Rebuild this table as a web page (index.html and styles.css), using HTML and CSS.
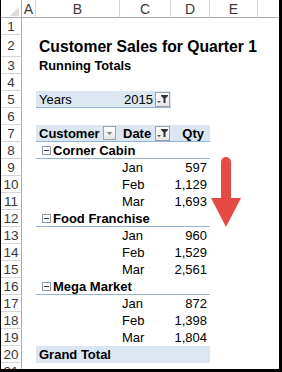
FILE: index.html
```html
<!DOCTYPE html>
<html>
<head>
<meta charset="utf-8">
<link rel="stylesheet" href="styles.css">
</head>
<body>
<div class="sheet">
  <div class="row hdr">
    <div class="corner"><span class="tri"></span></div>
    <div class="ch">A</div>
    <div class="ch">B</div>
    <div class="ch">C</div>
    <div class="ch">D</div>
    <div class="ch">E</div>
    <div class="ch last"></div>
  </div>

  <div class="row"><div class="rh">1</div></div>
  <div class="row tall"><div class="rh">2</div><div class="c colB title">Customer Sales for Quarter 1</div></div>
  <div class="row"><div class="rh">3</div><div class="c colB subtitle">Running Totals</div></div>
  <div class="row"><div class="rh">4</div></div>
  <div class="row">
    <div class="rh">5</div>
    <div class="c colB pvhd">Years</div>
    <div class="c colC pvhd right">2015<span class="fbtn"><svg width="13" height="12" viewBox="0 0 13 12"><polygon points="1,8 5,8 3,10" fill="#555"/><polygon points="5,2 12,2 12,3 9.5,5.5 9.5,10 7.5,10 7.5,5.5 5,3" fill="#333"/></svg></span></div>
  </div>
  <div class="row"><div class="rh">6</div></div>
  <div class="row">
    <div class="rh">7</div>
    <div class="c colB pvhd bold split">Customer<span class="dbtn"><svg width="11" height="12" viewBox="0 0 11 12"><polygon points="2.5,5 8.5,5 5.5,8" fill="#8a8a8a"/></svg></span></div>
    <div class="c colC pvhd bold split">Date<span class="fbtn"><svg width="13" height="12" viewBox="0 0 13 12"><polygon points="1,8 5,8 3,10" fill="#555"/><polygon points="5,2 12,2 12,3 9.5,5.5 9.5,10 7.5,10 7.5,5.5 5,3" fill="#333"/></svg></span></div>
    <div class="c colD pvhd bold num qty">Qty</div>
  </div>

  <div class="row"><div class="rh">8</div><div class="c grp bold"><span class="minus"></span>Corner Cabin</div></div>
  <div class="row"><div class="rh">9</div><div class="c colC month">Jan</div><div class="c colD num">597</div></div>
  <div class="row"><div class="rh">10</div><div class="c colC month">Feb</div><div class="c colD num">1,129</div></div>
  <div class="row"><div class="rh">11</div><div class="c colC month">Mar</div><div class="c colD num">1,693</div></div>

  <div class="row"><div class="rh">12</div><div class="c grp bold"><span class="minus"></span>Food Franchise</div></div>
  <div class="row"><div class="rh">13</div><div class="c colC month">Jan</div><div class="c colD num">960</div></div>
  <div class="row"><div class="rh">14</div><div class="c colC month">Feb</div><div class="c colD num">1,529</div></div>
  <div class="row"><div class="rh">15</div><div class="c colC month">Mar</div><div class="c colD num">2,561</div></div>

  <div class="row"><div class="rh">16</div><div class="c grp bold"><span class="minus"></span>Mega Market</div></div>
  <div class="row"><div class="rh">17</div><div class="c colC month">Jan</div><div class="c colD num">872</div></div>
  <div class="row"><div class="rh">18</div><div class="c colC month">Feb</div><div class="c colD num">1,398</div></div>
  <div class="row"><div class="rh">19</div><div class="c colC month">Mar</div><div class="c colD num">1,804</div></div>

  <div class="row"><div class="rh">20</div><div class="c total bold">Grand Total</div></div>
  <div class="row"><div class="rh">21</div></div>

  <svg class="arrow" width="33" height="75" viewBox="0 0 33 75">
    <rect x="11" y="2" width="10" height="46" rx="5" fill="#e64a45"/>
    <polygon points="1,43 31,43 16,72" fill="#e64a45"/>
  </svg>
</div>
</body>
</html>
```

FILE: styles.css
```css
html, body {
  margin: 0;
  padding: 0;
  background: #fff;
}

.sheet {
  position: relative;
  width: 282px;
  height: 372px;
  box-sizing: border-box;
  border-left: 1px solid #000;
  border-right: 3px solid #000;
  border-bottom: 3px solid #000;
  overflow: hidden;
  font-family: "Liberation Sans", Arial, sans-serif;
  color: #000;
  font-size: 13px;
}

.row {
  display: grid;
  grid-template-columns: 21px 14px 84px 51px 39px 48px 21px;
  height: 17px;
}

.row.tall {
  height: 22px;
}

.row.hdr {
  height: 18px;
}

.corner,
.ch {
  box-sizing: border-box;
  border-bottom: 1px solid #ababab;
  border-right: 1px solid #d6d6d6;
  display: flex;
  align-items: center;
  justify-content: center;
  font-size: 14px;
  color: #3a3a3a;
  position: relative;
}

.corner {
  border-right-color: #ababab;
}

.ch.last {
  border-right: none;
}

.tri {
  position: absolute;
  right: 2px;
  bottom: 1px;
  width: 0;
  height: 0;
  border-left: 9px solid transparent;
  border-bottom: 9px solid #dcdcdc;
}

.rh {
  box-sizing: border-box;
  border-right: 1px solid #ababab;
  border-bottom: 1px solid #d6d6d6;
  display: flex;
  align-items: center;
  justify-content: center;
  font-size: 13.5px;
  color: #3a3a3a;
}

.c {
  box-sizing: border-box;
  display: flex;
  align-items: center;
  white-space: nowrap;
  min-width: 0;
}

.colB { grid-column: 3; padding-left: 3px; }
.colC { grid-column: 4; }
.colD { grid-column: 5; }

.title {
  font-weight: bold;
  font-size: 15.7px;
  overflow: visible;
  padding-top: 1px;
}

.subtitle {
  font-weight: bold;
  font-size: 12.8px;
}

.bold { font-weight: bold; }

.pvhd {
  background: #dce6f1;
  border-bottom: 1px solid #95b3d7;
}

.pvhd.right {
  justify-content: flex-end;
  padding-right: 1px;
  gap: 2px;
}

.split {
  justify-content: space-between;
  padding-left: 3px;
  padding-right: 1px;
}

.colB.split {
  padding-right: 4px;
}

.fbtn,
.dbtn {
  box-sizing: border-box;
  width: 15px;
  height: 15px;
  border: 1px solid #a0a0a0;
  background: linear-gradient(#ffffff, #e6e6e6);
  display: flex;
  align-items: center;
  justify-content: center;
}

.dbtn {
  width: 13px;
  height: 14px;
}

.num {
  justify-content: flex-end;
  padding-right: 3px;
}

.qty {
  padding-right: 6px;
}

.month {
  padding-left: 2px;
}

.grp {
  grid-column: 3 / 6;
  border-bottom: 1px solid #95b3d7;
  padding-left: 6px;
}

.minus {
  box-sizing: border-box;
  width: 9px;
  height: 9px;
  border: 1px solid #8c99a8;
  background: #fff;
  margin-right: 2px;
  position: relative;
  flex: none;
}

.minus::after {
  content: "";
  position: absolute;
  left: 1px;
  right: 1px;
  top: 3px;
  height: 1px;
  background: #333;
}

.total {
  grid-column: 3 / 6;
  background: #dce6f1;
  padding-left: 3px;
}

.arrow {
  position: absolute;
  left: 209px;
  top: 155px;
}
```
